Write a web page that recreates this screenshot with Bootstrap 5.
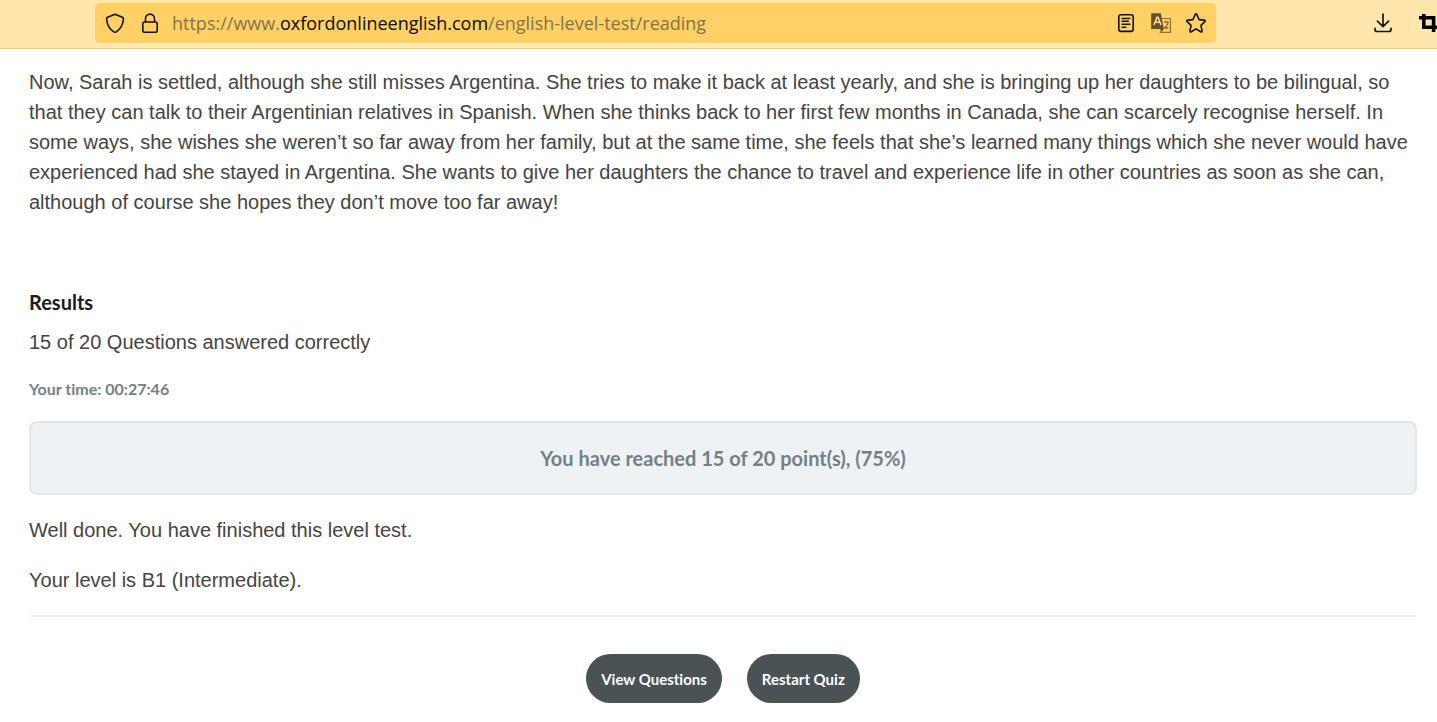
<!DOCTYPE html>
<html lang="en">
<head>
<meta charset="utf-8">
<meta name="viewport" content="width=device-width, initial-scale=1">
<title>Reading level test</title>
<link rel="stylesheet" href="https://cdn.jsdelivr.net/npm/bootstrap@5.3.0/dist/css/bootstrap.min.css">
<style>
  body { font-family: "Liberation Sans", Arial, sans-serif; font-size: 20px; line-height: 30px; color: #444; background: #fff; }
  .browser-bar { background: #ffe6ad; border-bottom: 1px solid #ffd166; padding: 3px 0 5px 95px; }
  .address-bar { background: #ffd066; border-radius: 5px; height: 40px; flex: 0 1 1121px; padding: 0 9px; }
  .address-text { font-family: "Open Sans", "Noto Sans", sans-serif; font-size: 18px; line-height: 28px; color: #85724a; outline: 0; margin-left: 10px; }
  .address-text b { font-weight: 400; color: #0c0a05; }
  .icon-btn { background: none; border: 0; padding: 0; display: flex; color: #15141a; }
  .address-icons { gap: 13px; }
  .quiz-page { padding: 18px 20px 19px 29px; }
  .story { margin-bottom: 70px; }
  .quiz-title, .quiz-time, .score-box, .quiz-btn { font-family: Lato, sans-serif; font-weight: 700; font-variant-ligatures: none; }
  .quiz-title { font-size: 20px; line-height: 30px; color: #1b1b1b; margin-bottom: 10px; }
  .quiz-time { font-size: 16px; line-height: 24px; color: #728188; margin-bottom: 20px; }
  .score-box { background: #eef2f5; border: 2px solid #e1e6eb; border-radius: 8px; color: #728188; padding: 20px; margin-bottom: 20px; }
  .quiz-text { margin-bottom: 20px; }
  .quiz-line { border-top: 2px solid #eef2f5; opacity: 1; margin: 0 0 37px; }
  .quiz-actions { gap: 25px; }
  .quiz-btn { background: #495255; color: #fff; font-size: 15px; line-height: 24px; padding: 13px 15px 12px; border: 0; border-radius: 25px; }
  .quiz-btn:hover { background: #394144; color: #fff; }
</style>
</head>
<body>
<header class="browser-bar d-flex align-items-center">
  <div class="address-bar d-flex align-items-center">
    <button class="icon-btn" aria-label="Tracking protection">
      <svg width="22" height="22" viewBox="0 0 22 22" fill="none" stroke="currentColor" stroke-width="1.6" stroke-linejoin="round"><path d="M11 2.2 L18.4 5.3 Q19.5 5.8 19.4 7 Q18.8 15.6 12.2 19.9 Q11 20.7 9.8 19.9 Q3.2 15.6 2.6 7 Q2.5 5.8 3.6 5.3 Z"/></svg>
    </button>
    <button class="icon-btn ms-2 ps-1" aria-label="Site information">
      <svg width="24" height="22" viewBox="0 0 24 22" fill="none" stroke="currentColor" stroke-width="1.6"><rect x="4.8" y="10" width="14.4" height="10.2" rx="2"/><path d="M7.5 10V6.6a4.5 4.5 0 0 1 9 0V10"/></svg>
    </button>
    <div class="address-text flex-grow-1 text-nowrap" role="textbox" contenteditable="true" spellcheck="false" aria-label="Address">https://www.<b>oxfordonlineenglish.com</b>/english-level-test/reading</div>
    <div class="address-icons d-flex">
      <button class="icon-btn" aria-label="Reader view">
        <svg width="22" height="22" viewBox="0 0 22 22" fill="none" stroke="currentColor" stroke-width="1.6" stroke-linecap="round"><rect x="3.8" y="2.8" width="14.4" height="16.6" rx="2.2"/><path d="M7.2 6.5h7.6M7.2 9.3h6M7.2 12.2h7.6M7.2 15.2h3.6"/></svg>
      </button>
      <button class="icon-btn" aria-label="Translate page">
        <svg width="22" height="22" viewBox="0 0 22 22"><path d="M11 6.5h9.4v13.9H9.8" fill="none" stroke="#8a713a" stroke-width="1.2"/><path d="M1.2 1.2h9.6l3 15.8H1.2z" fill="#655229"/><path d="M4 13 7 5.2h1L11 13M5.2 10.2h4.6" fill="none" stroke="#ffe09a" stroke-width="1.5"/><path d="M10.5 17h3.3l-3 3.6z" fill="#574621"/><path d="M14 10.2h4.2q-.3 2.6-3.6 5.8h3.8M16 8.8v1.4" fill="none" stroke="#806832" stroke-width="1.3"/></svg>
      </button>
      <button class="icon-btn" aria-label="Bookmark this page">
        <svg width="22" height="22" viewBox="0 0 22 22" fill="none" stroke="currentColor" stroke-width="1.6" stroke-linejoin="round"><path d="M10.1 2.6q.9-1.4 1.8 0l2.2 5 5.2.5q1.5.3.6 1.6l-4 3.7 1.2 5.3q.2 1.6-1.4 1L11 16.9l-4.7 2.8q-1.6.6-1.4-1l1.2-5.3-4-3.7q-.9-1.3.6-1.6l5.2-.5z"/></svg>
      </button>
    </div>
  </div>
  <div class="d-flex ms-auto overflow-hidden">
    <button class="icon-btn me-4" aria-label="Downloads">
      <svg width="22" height="22" viewBox="0 0 22 22" fill="none" stroke="currentColor" stroke-width="1.7" stroke-linecap="round" stroke-linejoin="round"><path d="M11 2v12.4M5.4 9.2l5.6 5.5 5.6-5.5M3 16.3v1.2q0 2 2 2h12q2 0 2-2v-1.2"/></svg>
    </button>
    <button class="icon-btn" aria-label="Crop screenshot">
      <svg width="19" height="22" viewBox="0 0 19 22" fill="none" stroke="#000" stroke-width="3.6"><path d="M1 5.8h14.6V20M5.8 2v13.2H19"/></svg>
    </button>
  </div>
</header>

<main class="quiz-page">
  <p class="story">Now, Sarah is settled, although she still misses Argentina. She tries to make it back at least yearly, and she is bringing up her daughters to be bilingual, so that they can talk to their Argentinian relatives in Spanish. When she thinks back to her first few months in Canada, she can scarcely recognise herself. In some ways, she wishes she weren’t so far away from her family, but at the same time, she feels that she’s learned many things which she never would have experienced had she stayed in Argentina. She wants to give her daughters the chance to travel and experience life in other countries as soon as she can, although of course she hopes they don’t move too far away!</p>
  <h4 class="quiz-title">Results</h4>
  <p class="quiz-text">15 of 20 Questions answered correctly</p>
  <p class="quiz-time">Your time: 00:27:46</p>
  <div class="score-box text-center">You have reached 15 of 20 point(s), (75%)</div>
  <p class="quiz-text">Well done. You have finished this level test.</p>
  <p class="quiz-text">Your level is B1 (Intermediate).</p>
  <hr class="quiz-line">
  <div class="quiz-actions d-flex justify-content-center">
    <button type="button" class="btn quiz-btn">View Questions</button>
    <button type="button" class="btn quiz-btn">Restart Quiz</button>
  </div>
</main>
<script src="https://cdn.jsdelivr.net/npm/bootstrap@5.3.0/dist/js/bootstrap.bundle.min.js"></script>
</body>
</html>
